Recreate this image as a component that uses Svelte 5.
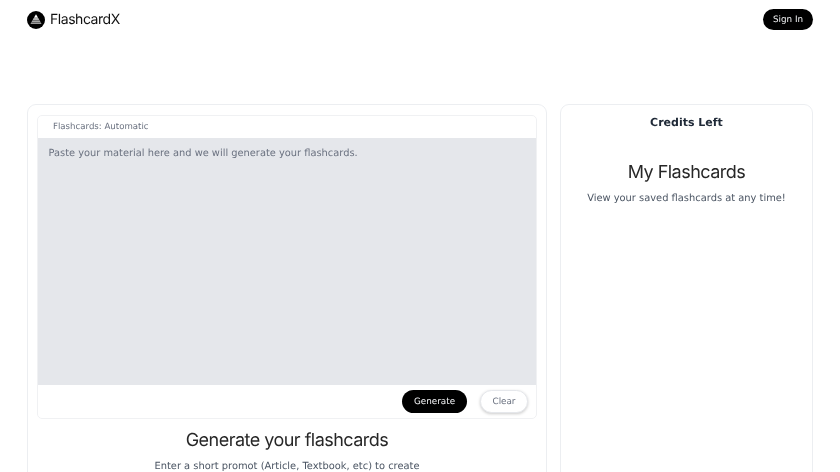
<script>
  let material = "";
</script>

<div class="page">
  <nav class="nav">
    <div class="brand">
      <svg width="18" height="18" viewBox="0 0 19 19">
        <circle cx="9.5" cy="9.5" r="9.5" fill="#000" />
        <path d="M9.5 3.4 L11.7 7 H7.3 Z" fill="#fff" />
        <path d="M7 7.7 H12 L13 9.3 H6 Z" fill="#f0f0f0" />
        <path d="M5.6 10 H13.4 L14.2 11.4 H4.8 Z" fill="#ddd" />
        <path d="M4.4 12.1 H14.6 L15.3 13.5 H3.7 Z" fill="#ccc" />
      </svg>
      <span class="brand-name">FlashcardX</span>
    </div>
    <button class="btn dark signin">Sign In</button>
  </nav>

  <main class="columns">
    <section class="card left">
      <div class="editor">
        <div class="editor-head">Flashcards: Automatic</div>
        <textarea bind:value={material} placeholder="Paste your material here and we will generate your flashcards."></textarea>
        <div class="editor-foot">
          <button class="btn dark generate">Generate</button>
          <button class="btn clear">Clear</button>
        </div>
      </div>
      <h2>Generate your flashcards</h2>
      <p>Enter a short promot (Article, Textbook, etc) to create</p>
    </section>

    <aside class="card right">
      <h3>Credits Left</h3>
      <h2 class="saved">My Flashcards</h2>
      <p>View your saved flashcards at any time!</p>
    </aside>
  </main>
</div>

<style>
  :global(body) {
    margin: 0;
    background: #fff;
    overflow: hidden;
  }
  .page {
    height: 472px;
    overflow: hidden;
    padding: 0 27px;
    font-family: "DejaVu Sans", sans-serif;
    text-rendering: geometricPrecision;
    will-change: opacity; /* greyscale text, like the reference */
  }
  .nav {
    display: flex;
    justify-content: space-between;
    align-items: center;
    height: 39px;
  }
  .brand {
    display: flex;
    align-items: center;
    gap: 5px;
  }
  .brand svg {
    display: block;
  }
  .brand-name {
    font-family: Inter, sans-serif;
    font-size: 14px;
    letter-spacing: -0.45px;
    color: #111;
  }
  .btn {
    border: 0;
    border-radius: 999px;
    font-family: inherit;
    font-size: 8.8px;
    padding: 0;
    text-rendering: geometricPrecision;
  }
  .dark {
    background: #000;
    color: #f3f4f6;
  }
  .signin {
    width: 50px;
    height: 21px;
  }
  .columns {
    display: grid;
    grid-template-columns: 520px 253px;
    gap: 13px;
    margin-top: 65px;
  }
  .card {
    border: 1px solid #eceef1;
    border-radius: 9px;
    box-sizing: border-box;
    height: 420px;
    text-align: center;
  }
  .left {
    padding: 10px 9px;
  }
  .editor {
    border: 1px solid #f0f1f3;
    border-radius: 5px;
    overflow: hidden;
    height: 304px;
    box-sizing: border-box;
    display: flex;
    flex-direction: column;
  }
  .editor-head {
    height: 22px;
    line-height: 22px;
    padding-left: 15px;
    text-align: left;
    font-size: 8.6px;
    color: #6b7280;
    flex: none;
  }
  textarea {
    display: block;
    height: 247px;
    flex: none;
    border: 0;
    margin: 0;
    resize: none;
    outline: none;
    background: #e5e7eb;
    padding: 9px 10.5px;
    font-family: inherit;
    font-size: 9.85px;
    line-height: 14px;
    box-sizing: border-box;
    width: 100%;
    text-rendering: geometricPrecision;
  }
  textarea::placeholder {
    color: #6b7280;
    opacity: 1;
  }
  .editor-foot {
    flex: 1;
    display: flex;
    justify-content: flex-end;
    align-items: center;
    gap: 13px;
    padding-right: 8px;
  }
  .generate {
    width: 65px;
    height: 23px;
  }
  .clear {
    width: 48px;
    height: 23px;
    background: #fff;
    color: #6b7280;
    border: 1px solid #e5e7eb;
    box-shadow: 0 1px 3px rgba(0, 0, 0, 0.2);
  }
  h2 {
    margin: 11px 0 0;
    font-family: Inter, sans-serif;
    font-weight: 400;
    font-size: 18px;
    line-height: 22px;
    letter-spacing: -0.52px;
    color: #272727;
  }
  p {
    margin: 8px 0 0;
    font-size: 9.9px;
    line-height: 14px;
    color: #4b5563;
  }
  .right h3 {
    margin: 11px 0 0;
    font-size: 11px;
    line-height: 14px;
    font-weight: 700;
    color: #1f2937;
  }
  .saved {
    margin-top: 32px;
  }
</style>
